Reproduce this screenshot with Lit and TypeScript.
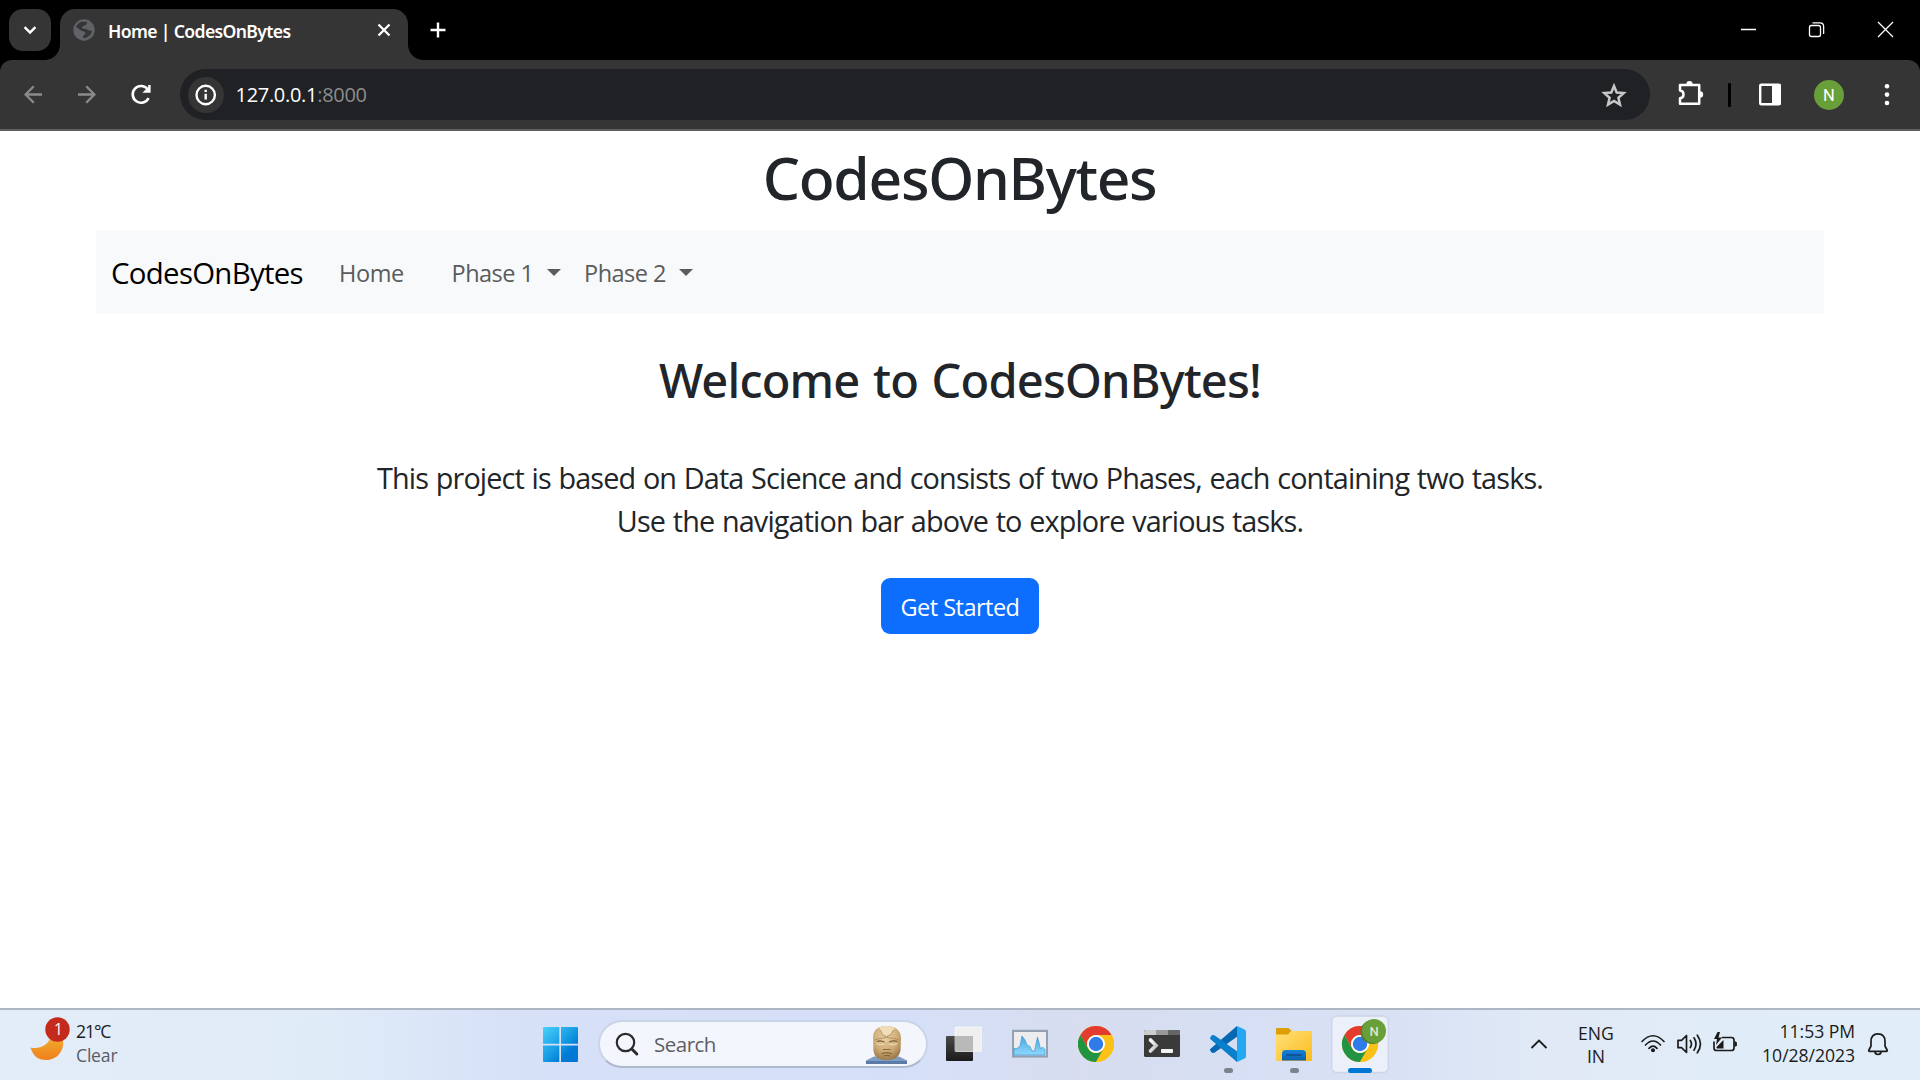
import { LitElement, html, css, svg } from "lit";
import { customElement } from "lit/decorators.js";

/* Browser window: tab strip and toolbar */
@customElement("browser-chrome")
export class BrowserChrome extends LitElement {
  static styles = css`
    :host { display: block; font-family: "Open Sans", "Noto Sans", sans-serif; }
    svg { display: block; flex: none; }
    .strip { display: flex; height: 60px; background: #000; padding-left: 9px; }
    .tabsearch { width: 42px; height: 42px; margin-top: 9px; border-radius: 14px; background: #353535; flex: none; }
    .tab { position: relative; display: flex; align-items: flex-start; width: 348px; height: 51px; margin: 9px 0 0 9px; border-radius: 15px 15px 0 0; background: #353535; flex: none; box-sizing: border-box; }
    .tab::before, .tab::after { content: ""; position: absolute; bottom: 0; width: 15px; height: 15px; }
    .tab::before { left: -15px; background: radial-gradient(circle at 0 0, transparent 14.5px, #353535 15.2px); }
    .tab::after { right: -15px; background: radial-gradient(circle at 100% 0, transparent 14.5px, #353535 15.2px); }
    .title { font: 600 17.6px/44px "Noto Sans", sans-serif; letter-spacing: -0.64px; color: #fff; width: 258px; padding-left: 12px; white-space: nowrap; }
    .spacer { flex: 1; }
    .bar { display: flex; align-items: center; height: 69px; background: #353535; border-bottom: 2px solid #5f5f5f; border-radius: 12px 12px 0 0; }
    .back { background: #000; }
    .omni { display: flex; align-items: center; width: 1470px; height: 51px; border-radius: 26px; background: #202124; margin-left: 20px; flex: none; }
    .info { width: 36px; height: 36px; border-radius: 50%; background: #353535; margin-left: 7.5px; }
    .url { font-size: 20px; line-height: 50px; letter-spacing: -0.3px; color: #fff; margin-left: 12px; white-space: nowrap; }
    .port { color: #8d8d8d; }
    .star { margin-right: 22px; }
  `;
  render() {
    return html`
      <div class="strip">
        <div class="tabsearch">
          <svg width="42" height="42" viewBox="0 0 42 42"><path d="M15.6 18.2l5.4 5.4 5.4-5.4" fill="none" stroke="#fff" stroke-width="2.5"/></svg>
        </div>
        <div class="tab">
          <svg width="36" height="44" viewBox="60 9 36 44">
            <circle cx="84" cy="30" r="10.700" fill="#5f6368"/>
            <path d="M76 27Q77.500 23 81.500 21.800L87 21.800Q87 25 84.500 25.500 81.500 26 82 28.500L86.500 29Q88.500 31.200 92 30.500 91.500 35.500 85.500 38L83 38Q83 34.500 85.500 34 86 31.500 82 31z" fill="#353535"/>
          </svg>
          <span class="title">Home | CodesOnBytes</span>
          <svg width="36" height="44" viewBox="366 9 36 44"><path d="M378.500 24.500l11 11M389.500 24.500l-11 11" stroke="#fff" stroke-width="2.300"/></svg>
        </div>
        <svg width="60" height="60" viewBox="408 0 60 60"><path d="M430.500 30h15M438 22.500v15" stroke="#fff" stroke-width="2.400"/></svg>
        <span class="spacer"></span>
        <svg width="220" height="60" viewBox="1700 0 220 60" fill="none" stroke="#fff" stroke-width="1.300">
          <path d="M1741 29.500h15M1878 22l15 15M1893 22l-15 15"/>
          <rect x="1809.500" y="25.500" width="11" height="11" rx="2"/>
          <path d="M1812.500 22.800h7.500q3.600 0 3.600 3.600v7.500"/>
        </svg>
      </div>
      <div class="back"><div class="bar">
        <svg width="160" height="69" viewBox="0 60 160 69" fill="none" stroke="#8b8b8b" stroke-width="2.300">
          <path d="M42 94.500H26M33.800 86.300l-8.200 8.200 8.200 8.200"/>
          <path d="M78 94.500h16M86.200 86.300l8.200 8.200-8.200 8.200"/>
          <g stroke="#fff" stroke-width="2.600"><path d="M148.600 98.200A8.400 8.400 0 1 1 147.600 89"/></g>
          <path d="M150.600 85v7.800h-8.200l3.200-3.200 2.600-1.800 0-2.800z" fill="#fff" stroke="none"/>
        </svg>
        <div class="omni">
          <svg class="info" viewBox="0 0 36 36"><circle cx="17.700" cy="18" r="9.200" fill="none" stroke="#fff" stroke-width="2.400"/><path d="M17.700 16.800v5.700M17.700 12.800v2.300" stroke="#fff" stroke-width="2.400"/></svg>
          <span class="url">127.0.0.1<span class="port">:8000</span></span>
          <span class="spacer"></span>
          <svg class="star" width="28" height="28" viewBox="1600 80 28 28"><path d="M1614 85l2.700 6.500 7 .6-5.300 4.600 1.600 6.900-6-3.700-6 3.700 1.600-6.900-5.300-4.600 7-.6z" fill="none" stroke="#c7c7c7" stroke-width="2.500"/></svg>
        </div>
        <svg width="270" height="69" viewBox="1650 60 270 69">
          <path d="M1680 85h19.200v18.800H1680v-5.600q3.500-.4 3.500-3.800t-3.500-3.800z" fill="none" stroke="#fff" stroke-width="2.500" stroke-linejoin="round"/>
          <path d="M1686.300 84.500a3.200 3.400 0 0 1 6.400 0zM1699.800 91.300a3.400 3.200 0 0 1 0 6.400z" fill="#fff"/>
          <rect x="1728" y="83" width="3" height="24" rx="1" fill="#000"/>
          <rect x="1760.200" y="84.700" width="19.600" height="19.600" rx="1" fill="none" stroke="#fff" stroke-width="2.400"/>
          <rect x="1772" y="84" width="8.500" height="21" fill="#fff"/>
          <circle cx="1829" cy="95" r="15" fill="#689f38"/>
          <text x="1829" y="101" text-anchor="middle" font-size="16.500" font-family="Roboto, sans-serif" fill="#fff">N</text>
          <g fill="#fff"><circle cx="1887" cy="86.200" r="2.300"/><circle cx="1887" cy="94.600" r="2.300"/><circle cx="1887" cy="103" r="2.300"/></g>
        </svg>
      </div></div>`;
  }
}

/* Site shown in the browser */
@customElement("site-page")
export class SitePage extends LitElement {
  static styles = css`
    :host { display: block; font-family: "Open Sans", "Noto Sans", sans-serif; color: #212529; background: #fff; padding: 0 96px; text-align: center; box-sizing: border-box; height: 877px; }
    h1, h2, p { margin: 0; font-weight: 500; }
    h1 { font: 500 58.800px/92px "Noto Sans", sans-serif; letter-spacing: -1.300px; padding: 0 1px 7px 0; }
    nav { display: flex; align-items: center; height: 84px; background: #f8f9fa; padding: 0 15px; color: #5a5b5c; font-size: 23.500px; white-space: nowrap; box-sizing: border-box; }
    nav span { padding-top: 2px; }
    .brand { color: #000; font-size: 29.400px; letter-spacing: -0.700px; width: 228px; text-align: left; }
    .home { letter-spacing: -0.400px; width: 112.500px; text-align: left; }
    .drop { display: flex; align-items: center; letter-spacing: -0.500px; width: 132.500px; box-sizing: border-box; }
    .drop i { margin: -2px 0 0 13px; border: 7px solid transparent; border-top-color: #5a5b5c; border-bottom: 0; }
    h2 { font: 500 47px/59px "Noto Sans", sans-serif; letter-spacing: -0.800px; word-spacing: 2px; padding: 37px 0 46px; }
    p { font-size: 28.800px; line-height: 43px; font-weight: 400; letter-spacing: -0.860px; word-spacing: 1px; }
    a { display: inline-block; box-sizing: border-box; width: 158px; height: 56px; margin-top: 36px; padding-top: 1px; border-radius: 9px; background: #0d6efd; color: #fff; font-size: 23.500px; line-height: 56px; letter-spacing: -0.520px; }
  `;
  render() {
    return html`
      <h1>CodesOnBytes</h1>
      <nav>
        <span class="brand">CodesOnBytes</span>
        <span class="home">Home</span>
        <span class="drop">Phase 1<i></i></span>
        <span class="drop">Phase 2<i></i></span>
      </nav>
      <h2>Welcome to CodesOnBytes!</h2>
      <p>This project is based on Data Science and consists of two Phases, each containing two tasks.<br>Use the navigation bar above to explore various tasks.</p>
      <a>Get Started</a>`;
  }
}

/* 36px Chrome logo centred on the origin */
const chromeLogo = svg`
  <circle r="18" fill="#fbc116"/>
  <path d="M-15.600-9A18 18 0 0 1 15.600-9H0A9 9 0 0 0-7.800 4.500z" fill="#e33b2e"/>
  <path d="M-15.600-9A18 18 0 0 0 0 18L7.800 4.500A9 9 0 0 1-7.800 4.500z" fill="#229342"/>
  <path d="M0-9H15.600A18 18 0 0 1 0 18L7.800 4.500A9 9 0 0 0 0-9z" fill="#fbc116"/>
  <circle r="9" fill="#fff"/><circle r="7.200" fill="#2f7bea"/>`;

@customElement("task-bar")
export class TaskBar extends LitElement {
  static styles = css`
    :host { display: flex; height: 72px; box-sizing: border-box; border-top: 2px solid #adb6c3; font-family: "Open Sans", "Noto Sans", sans-serif; white-space: nowrap; color: #1b1b1b;
      background: linear-gradient(90deg, #e2edf8 0, #e0ebf8 330px, #d6e1f8 520px, #d5e0f8 900px, #d8ddf0 1080px, #d6dff3 1240px, #d9e2f5 1400px, #e0e9f5 1540px, #e0edf9 1750px, #e1edf8 100%); }
    svg { display: block; flex: none; }
    .weather { display: flex; width: 543px; flex: none; }
    .weather div { font-size: 17.600px; line-height: 24px; padding-top: 9px; letter-spacing: -0.200px; }
    .deg { letter-spacing: -1.100px; }
    .muted { color: #5a5e64; }
    .apps { display: flex; gap: 30px; width: 976px; flex: none; }
    .start { margin-right: -11px; }
    .pill { display: flex; align-items: center; box-sizing: border-box; width: 330px; height: 48px; margin-top: 10px; margin-right: -12px; border: 2px solid #c9d4e6; border-bottom-color: #afb9cc; border-radius: 24px; background: #f3f6fd; }
    .pill span { font-size: 20.500px; letter-spacing: -0.500px; color: #5e6064; flex: 1; padding-left: 14px; }
    .head { margin-right: 15px; }
    .active { margin-left: -11px; }
    .tray { display: flex; flex: 1; }
    .lang { font-size: 17.600px; line-height: 23px; padding-top: 12px; width: 38px; text-align: center; }
    .clock { font-size: 17.600px; line-height: 24px; padding-top: 9px; width: 111px; margin-right: -1px; text-align: right; letter-spacing: -0.050px; }
  `;
  render() {
    return html`
      <div class="weather">
        <svg width="76" height="70" viewBox="1 1010 76 70">
          <defs><linearGradient id="moon" x1="0" y1="0" x2="0" y2="1"><stop offset="0" stop-color="#f0b433"/><stop offset="1" stop-color="#f07f1c"/></linearGradient></defs>
          <path d="M31.500 1047.500C41 1050 52 1044 52.500 1033Q64 1032 64.300 1043A17 17 0 0 1 47 1060Q35 1060 31.500 1047.500z" fill="url(#moon)"/>
          <circle cx="58.500" cy="1029.500" r="12.200" fill="#c42b1c"/>
          <text x="59.500" y="1035.200" text-anchor="middle" font-family="Open Sans, sans-serif" font-size="15.500" fill="#fff">1</text>
        </svg>
        <div><span class="deg">21°C</span><br><span class="muted">Clear</span></div>
      </div>
      <div class="apps">
        <svg class="start" width="36" height="70" viewBox="543 1010 36 70">
          <defs><linearGradient id="win" gradientUnits="userSpaceOnUse" x1="543" y1="1027" x2="578" y2="1062"><stop offset="0" stop-color="#4cd0fc"/><stop offset=".5" stop-color="#149be3"/><stop offset=".75" stop-color="#0078d4"/></linearGradient></defs>
          <path d="M544 1027h15.300v16.700H543V1028q0-1 1-1zM561 1027h16q1 0 1 1v15.700h-17zM543 1045.400h16.300v16.600H544q-1 0-1-1zM561 1045.400h17v15.600q0 1-1 1h-16z" fill="url(#win)"/>
        </svg>
        <div class="pill">
          <svg width="40" height="44" viewBox="600 1022 40 44" fill="none" stroke="#2b2b2b"><circle cx="625.500" cy="1042.500" r="8.700" stroke-width="2.200"/><path d="M631.800 1049l5 5" stroke-width="3" stroke-linecap="round"/></svg>
          <span>Search</span>
          <svg class="head" width="48" height="44" viewBox="862 1022 48 44">
            <defs><radialGradient id="stone" cx=".45" cy=".3" r=".75"><stop offset="0" stop-color="#ead3a8"/><stop offset=".6" stop-color="#cdaa75"/><stop offset="1" stop-color="#94713f"/></radialGradient></defs>
            <path d="M865 1064v-3.500l8-4h25l8 4v3.500z" fill="#7f9cc2"/><path d="M865 1061h41v3h-41z" fill="#5b7aa6"/>
            <path d="M872 1038q0-12 13.500-12t14.500 12l-.5 13q-2 9-14 9t-13-9z" fill="url(#stone)"/>
            <path d="M878.500 1027.500l1.500 6q6 4 11 0l2.500-5.500q-7-3.500-15-.5z" fill="#efdcb8"/>
            <path d="M879.500 1030l1.500 4.500 4.500 2.500 4.500-2.500 2.500-4.500M873.500 1040q5-2 12-2.500 7 .5 13 2.500" fill="none" stroke="#ab8c5c" stroke-width=".9"/>
            <path d="M876 1041.500q4-1.500 7.500.8M888 1042.300q4-2.300 8.500-.8" fill="none" stroke="#7d6038" stroke-width="1.300"/>
            <path d="M875.500 1043.500q4 2.500 8-.2M888 1043.300q4 2.700 8 .2" fill="none" stroke="#e9d5ad" stroke-width="1.300"/>
            <path d="M882 1049.500h7.500M880.500 1054q5-2.600 10.500 0M882.500 1056q3.500-1.200 6.500 0" fill="none" stroke="#86663a" stroke-width="1.200"/>
          </svg>
        </div>
        <svg width="36" height="70" viewBox="946 1010 36 70">
          <defs><linearGradient id="pane" x1="0" y1="0" x2="0" y2="1"><stop offset="0" stop-color="#4a4a4a"/><stop offset="1" stop-color="#1b1b1b"/></linearGradient></defs>
          <rect x="946" y="1036" width="27" height="25" rx="1" fill="url(#pane)"/>
          <rect x="955" y="1027" width="27" height="24.500" rx="1" fill="#efeff0" stroke="#fff" stroke-width=".6"/>
          <path d="M955 1036h18v15h-18z" fill="#b9b9b9"/>
        </svg>
        <svg width="36" height="70" viewBox="1012 1010 36 70">
          <defs><linearGradient id="area" x1="0" y1="0" x2="0" y2="1"><stop offset="0" stop-color="#4ba5dc"/><stop offset="1" stop-color="#8ed8ff"/></linearGradient></defs>
          <rect x="1012.900" y="1030.900" width="34.200" height="25.600" fill="#ededf0" stroke="#93a0b0" stroke-width="2.200"/>
          <path d="M1014 1055v-6.500h3l3-2.500 2-10 3 4 2 5 3 1.500 2 4.500h2.500l2-9.500 1-4.500 1.500 5.500 1.500 6.500 2-2 2.500 2.500v5.500z" fill="url(#area)" stroke="#3b9ad8" stroke-width=".7"/>
        </svg>
        <svg width="36" height="70" viewBox="-18 -34 36 70">${chromeLogo}</svg>
        <svg width="36" height="70" viewBox="1144 1010 36 70">
          <defs><linearGradient id="gt" x1="0" y1="0" x2="1" y2="1"><stop offset="0" stop-color="#fff"/><stop offset="1" stop-color="#bbb"/></linearGradient></defs>
          <rect x="1144" y="1030" width="36" height="27" rx="1.500" fill="#3a3a3a"/>
          <path d="M1145.500 1030H1156v5h-12v-3.500q0-1.500 1.500-1.500z" fill="#ccc"/><path d="M1156 1030h12v5h-12z" fill="#999"/><path d="M1168 1030h10.500q1.500 0 1.500 1.500v3.500h-12z" fill="#666"/>
          <path d="M1150.500 1040l5.500 5.500-5.500 5.500" fill="none" stroke="url(#gt)" stroke-width="3.600" stroke-linecap="round"/>
          <rect x="1161" y="1049" width="12" height="4" rx=".8" fill="#f2f2f2"/>
        </svg>
        <svg width="36" height="70" viewBox="1210 1010 36 70">
          <path d="M1237 1026v10.800l-22.600 16-2.200.1-1.900-2.100q-.6-1.300.5-2.200z" fill="#0468b3"/>
          <path d="M1237 1062v-10.800l-22.600-16-2.200-.1-1.900 2.100q-.6 1.300.5 2.200z" fill="#0a7fcb"/>
          <path d="M1237 1026l7.500 3.400q1.500.7 1.500 2.200v24.800q0 1.500-1.500 2.200L1237 1062z" fill="#24a8f2"/>
          <rect x="1224" y="1068" width="9" height="5" rx="2.500" fill="#7c828e"/>
        </svg>
        <svg width="36" height="70" viewBox="1276 1010 36 70">
          <defs><linearGradient id="fold" x1="0" y1="0" x2="1" y2="1"><stop offset="0" stop-color="#ffe07a"/><stop offset="1" stop-color="#fbbc1c"/></linearGradient><linearGradient id="dock" x1="0" y1="0" x2="0" y2="1"><stop offset="0" stop-color="#1683d8"/><stop offset="1" stop-color="#0a5fae"/></linearGradient></defs>
          <path d="M1277 1028h11.500l4 3.500v4H1276V1029q0-1 1-1z" fill="#dd9e06"/>
          <path d="M1276 1034.500h12l3-3.500h20q1 0 1 1v28q0 1-1 1h-34q-1 0-1-1z" fill="url(#fold)"/>
          <path d="M1282 1060.500v-7q0-3.500 3.500-3.500h17q3.500 0 3.500 3.500v7z" fill="url(#dock)"/><path d="M1287 1055h14" stroke="#0b4b86" stroke-width="1.600" stroke-linecap="round"/>
          <rect x="1290" y="1068" width="9" height="5" rx="2.500" fill="#7c828e"/>
        </svg>
        <svg class="active" width="58" height="70" viewBox="1331 1010 58 70">
          <rect x="1331.700" y="1016" width="56.600" height="56.500" rx="5" fill="#ebf0fa" stroke="#ccd4e6" stroke-width="1.300"/>
          <g transform="translate(1360 1044)">${chromeLogo}</g>
          <circle cx="1372.500" cy="1032" r="12" fill="#4f7b2c"/><circle cx="1374" cy="1031" r="12" fill="#689f38"/>
          <text x="1374" y="1035.800" text-anchor="middle" font-family="Roboto, sans-serif" font-weight="500" font-size="13" fill="#dbe8cf">N</text>
          <rect x="1348" y="1068" width="24" height="5" rx="2.500" fill="#0078d4"/>
        </svg>
      </div>
      <div class="tray">
        <svg width="58" height="70" viewBox="1519 1010 58 70"><path d="M1531.500 1048l7.500-7.500 7.500 7.500" fill="none" stroke="#1b1b1b" stroke-width="1.800"/></svg>
        <div class="lang">ENG<br>IN</div>
        <svg width="129" height="70" viewBox="1615 1010 129 70" fill="none" stroke="#1b1b1b" stroke-width="1.700" stroke-linecap="round">
          <path d="M1642 1041.500q11-11.500 22 0M1645.500 1045q7.500-8 15 0M1649 1048.300q4-4.200 8 0"/><circle cx="1653" cy="1050.300" r="2" fill="#1b1b1b" stroke="none"/>
          <path d="M1678 1040.300h3.500l5-4.800v17l-5-4.800h-3.500z" stroke-linejoin="round"/>
          <path d="M1690.300 1040.500q2.300 3.500 0 7M1694 1037.800q4 6.200 0 12.400M1697.300 1035.200q6.300 8.800 0 17.600"/>
          <path d="M1722.500 1037.500h9q2.500 0 2.500 2.500v8q0 2.500-2.500 2.500h-15q-2.500 0-2.500-2.500v-6"/>
          <path d="M1734.500 1041.500h1.300q1.200 0 1.200 2.500t-1.200 2.500h-1.300z" fill="#1b1b1b" stroke="none"/>
          <path d="M1716.500 1048v-1l7-7v8.500h-6.500zM1717.500 1032l-3.500 7h3l-1 6 6-7.500h-3.500l1.500-5.500z" fill="#1b1b1b" stroke="none"/>
        </svg>
        <div class="clock">11:53 PM<br>10/28/2023</div>
        <svg width="66" height="70" viewBox="1854 1010 66 70" fill="none" stroke="#1b1b1b" stroke-width="1.700" stroke-linejoin="round"><path d="M1871 1041.500q0-7.700 7-7.700t7 7.700v4.500l2.300 4.500q0 .8-.8.800h-17q-.8 0-.8-.8l2.300-4.500zM1875 1051.500q0 3 3 3t3-3"/></svg>
      </div>`;
  }
}

@customElement("app-root")
export class AppRoot extends LitElement {
  static styles = css`:host { display: block; width: 1920px; height: 1080px; overflow: hidden; background: #fff; }`;
  render() {
    return html`<browser-chrome></browser-chrome><site-page></site-page><task-bar></task-bar>`;
  }
}
